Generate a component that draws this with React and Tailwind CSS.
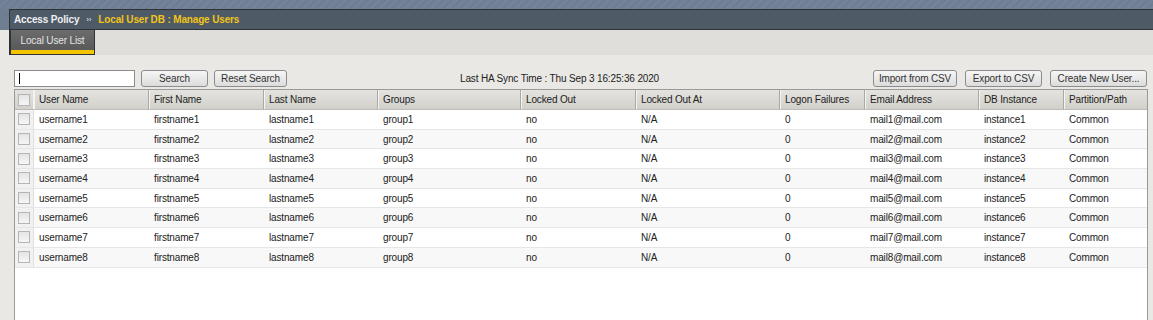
import React from "react";

// ── Column layout (widths in px, taken from the header) ───────
const COLUMNS = [
  { key: "user", label: "User Name", w: "w-[115px]" },
  { key: "first", label: "First Name", w: "w-[115px]" },
  { key: "last", label: "Last Name", w: "w-[114px]" },
  { key: "group", label: "Groups", w: "w-[143px]" },
  { key: "locked", label: "Locked Out", w: "w-[115px]" },
  { key: "lockedAt", label: "Locked Out At", w: "w-[144px]" },
  { key: "failures", label: "Logon Failures", w: "w-[85px]" },
  { key: "email", label: "Email Address", w: "w-[114px]" },
  { key: "instance", label: "DB Instance", w: "w-[85px]" },
  { key: "partition", label: "Partition/Path", w: "flex-1" },
];

const USERS = Array.from({ length: 8 }, (_, i) => {
  const n = i + 1;
  return {
    user: `username${n}`,
    first: `firstname${n}`,
    last: `lastname${n}`,
    group: `group${n}`,
    locked: "no",
    lockedAt: "N/A",
    failures: "0",
    email: `mail${n}@mail.com`,
    instance: `instance${n}`,
    partition: "Common",
  };
});

const Btn = ({ children, className = "" }) => (
  <button
    className={`h-[17px] px-0 whitespace-nowrap rounded-[3px] border border-[#8c8c8c] bg-[linear-gradient(#f6f6f6,#dcdcdc)] text-[10px] leading-[15px] text-[#333] ${className}`}
  >
    {children}
  </button>
);

const Check = () => (
  <div className="w-[12px] h-[12px] border border-[#b5b5b5] bg-[linear-gradient(#e4e4e4,#f6f6f6)]" />
);

export default function App() {
  return (
    <div
      className="w-[1153px] h-[320px] overflow-hidden bg-[#e9e8e4] text-[10px] tracking-[-0.15px] text-[#222]"
      style={{ fontFamily: '"Liberation Sans", Arial, sans-serif' }}
    >
      {/* Top striped band */}
      <div className="h-[9px] bg-[#6f7e90] bg-[repeating-linear-gradient(135deg,#6f7e90_0px,#6f7e90_3px,#73839a_3px,#73839a_6px)]" />

      <div className="pl-[9px] bg-[#6f7e90]">
        {/* Breadcrumb bar */}
        <div className="h-[21px] flex items-center gap-[7px] px-[4px] border-y border-[#2d3238] border-l bg-[#4f5a67] font-bold">
          <span className="text-[#eef0f2]">Access Policy</span>
          <span className="text-[#c8ccd2] text-[8px]">››</span>
          <span className="text-[#f0c419]">Local User DB : Manage Users</span>
        </div>
      </div>

      {/* Tab strip */}
      <div className="pl-[9px]">
        <div className="h-[25px] bg-[#dfdeda] border-l border-[#2d3238] flex">
          <div className="w-[85px] h-[25px] flex flex-col border-x border-b border-[#2d3238] bg-[linear-gradient(#6c6c6c,#555)]">
            <div className="flex-1 flex items-center justify-center text-[#e4e4e4]">Local User List</div>
            <div className="h-[4px] bg-[#f5c400]" />
          </div>
        </div>
      </div>

      {/* Toolbar */}
      <div className="mt-[15px] pl-[14px] pr-[6px] flex items-center h-[17px]">
        <div className="w-[121px] h-[17px] bg-white border border-[#8c8c8c] flex items-center pl-[4px]">
          <div className="w-px h-[11px] bg-black" />
        </div>
        <Btn className="ml-[6px] w-[67px]">Search</Btn>
        <Btn className="ml-[6px] w-[73px]">Reset Search</Btn>
        <div className="flex-1 text-center text-[#222] pr-[41px]">Last HA Sync Time : Thu Sep 3 16:25:36 2020</div>
        <Btn className="w-[84px]">Import from CSV</Btn>
        <Btn className="ml-[8px] w-[77px]">Export to CSV</Btn>
        <Btn className="ml-[8px] w-[97px]">Create New User...</Btn>
      </div>

      {/* Table */}
      <div className="mt-[2px] ml-[14px] mr-[5px] h-[300px] bg-white border-l border-r border-t border-[#9a9a9a]">
        <div className="flex h-[20px] bg-[linear-gradient(#e4e3df,#d2d0cb)] border-b border-[#bdbcb8]">
          <div className="w-[19px] flex items-center justify-center border-r border-[#f4f4f2]">
            <Check />
          </div>
          {COLUMNS.map((c) => (
            <div
              key={c.key}
              className={`${c.w} flex items-center pl-[4px] border-r border-l border-r-[#a9a8a4] border-l-[#f4f4f2] last:border-r-0`}
            >
              {c.label}
            </div>
          ))}
        </div>

        {USERS.map((u, i) => (
          <div
            key={u.user}
            className={`flex h-[19.7px] border-b border-[#e6e6e6] ${i % 2 ? "bg-[#f8f8f8]" : "bg-white"}`}
          >
            <div className="w-[19px] flex items-center justify-center bg-[#f1f1f1] border-r border-[#e0e0e0]">
              <Check />
            </div>
            {COLUMNS.map((c) => (
              <div key={c.key} className={`${c.w} flex items-center pl-[5px]`}>
                {u[c.key]}
              </div>
            ))}
          </div>
        ))}
      </div>
    </div>
  );
}
